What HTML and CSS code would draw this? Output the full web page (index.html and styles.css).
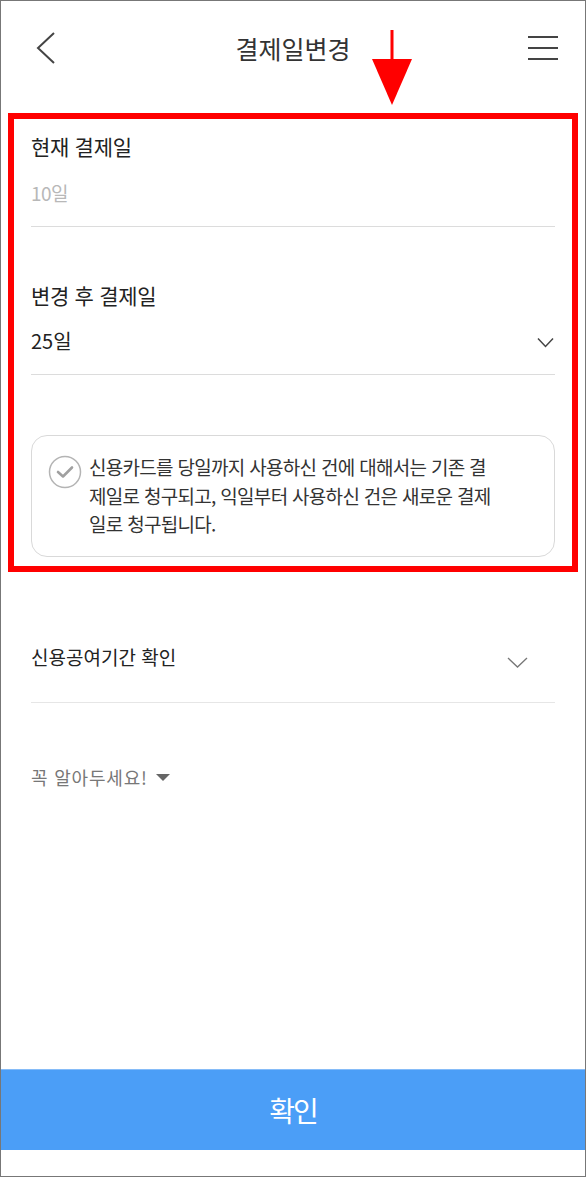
FILE: index.html
```html
<!DOCTYPE html>
<html lang="ko">
<head>
<meta charset="utf-8">
<link rel="stylesheet" href="styles.css">
</head>
<body>
<div class="frame">
  <header class="topbar">
    <svg class="back" width="20" height="32" viewBox="0 0 20 32"><polyline points="18,1 2,16 18,31" fill="none" stroke="#444" stroke-width="2"/></svg>
    <h1 class="title">결제일변경</h1>
    <svg class="menu" width="32" height="26" viewBox="0 0 32 26"><g stroke="#444" stroke-width="2"><line x1="1" y1="2" x2="31" y2="2"/><line x1="1" y1="13" x2="31" y2="13"/><line x1="1" y1="24" x2="31" y2="24"/></g></svg>
  </header>
  <svg class="marker-arrow" width="46" height="80" viewBox="0 0 46 80"><rect x="21.5" y="2" width="3" height="34" fill="#ff0000"/><polygon points="3,31 43,31 23,77" fill="#ff0000"/></svg>

  <section class="highlight">
    <div class="field">
      <div class="label">현재 결제일</div>
      <div class="value muted">10일</div>
    </div>
    <div class="field field-second">
      <div class="label">변경 후 결제일</div>
      <div class="value select">
        <span>25일</span>
        <svg class="chev" width="17" height="11" viewBox="0 0 17 11"><polyline points="1,1.5 8.5,9.5 16,1.5" fill="none" stroke="#444" stroke-width="1.5"/></svg>
      </div>
    </div>
    <div class="notice">
      <svg class="check" width="34" height="34" viewBox="0 0 34 34"><circle cx="17" cy="17" r="15.5" fill="none" stroke="#b4b4b4" stroke-width="1.5"/><polyline points="10,17 15,21.5 24,12.5" fill="none" stroke="#a0a0a0" stroke-width="2.6" stroke-linejoin="round" stroke-linecap="round"/></svg>
      <p class="notice-text">신용카드를 당일까지 사용하신 건에 대해서는 기존 결<br>제일로 청구되고, 익일부터 사용하신 건은 새로운 결제<br>일로 청구됩니다.</p>
    </div>
  </section>

  <div class="row">
    <span class="row-label">신용공여기간 확인</span>
    <svg class="chev2" width="21" height="11" viewBox="0 0 21 11"><polyline points="1,1 10.5,10 20,1" fill="none" stroke="#777" stroke-width="1.3"/></svg>
  </div>

  <div class="tip">꼭 알아두세요! <svg class="tri" width="14" height="8" viewBox="0 0 14 8"><polygon points="0,0 14,0 7,7" fill="#666"/></svg></div>

  <button class="confirm">확인</button>
</div>
</body>
</html>
```

FILE: styles.css
```css
* { box-sizing: border-box; }
html, body { margin: 0; padding: 0; background: #fff; }
body { font-family: "Noto Sans CJK KR", "Noto Sans", sans-serif; color: #222; }

.frame {
  position: relative;
  width: 586px;
  height: 1177px;
  border: 1px solid #777;
  display: flex;
  flex-direction: column;
  overflow: hidden;
}

.topbar {
  height: 94px;
  display: grid;
  grid-template-columns: 1fr auto 1fr;
  align-items: center;
  padding: 0 26px;
}
.back { justify-self: start; display: block; margin-left: 9px; }
.menu { justify-self: end; display: block; }
.title {
  margin: 0;
  font-size: 25px;
  font-weight: 400;
  color: #333;
  letter-spacing: 0;
  line-height: 34px;
}

.marker-arrow {
  position: absolute;
  left: 368px;
  top: 27px;
}

.highlight {
  margin: 18px 7px 0 7px;
  border: 6px solid #ff0000;
  padding: 12px 17px 9px 17px;
}

.field {
  border-bottom: 1px solid #dcdcdc;
  padding-bottom: 19px;
}
.field-second { margin-top: 53px; }
.label {
  font-size: 21px;
  line-height: 30px;
  letter-spacing: -0.3px;
  color: #222;
}
.value {
  margin-top: 18px;
  font-size: 19px;
  line-height: 28px;
  letter-spacing: -0.5px;
  color: #222;
}
.value.muted { color: #b8b8b8; }
.select {
  display: flex;
  align-items: center;
  justify-content: space-between;
  margin-top: 17px;
  font-size: 20px;
  letter-spacing: 0;
}
.chev { display: block; margin-right: 1px; margin-top: 3px; }

.notice {
  margin-top: 60px;
  border: 1px solid #d9d9d9;
  border-radius: 16px;
  padding: 17px 20px 17px 16px;
  display: flex;
  align-items: flex-start;
  gap: 7px;
}
.check { display: block; flex: none; margin-top: 2px; }
.notice-text {
  margin: 0;
  font-size: 19px;
  line-height: 28.5px;
  letter-spacing: -0.7px;
  color: #333;
  white-space: nowrap;
}

.row {
  margin: 70px 30px 0 30px;
  padding-bottom: 30px;
  border-bottom: 1px solid #e6e6e6;
  display: flex;
  align-items: center;
  justify-content: space-between;
}
.row-label {
  font-size: 19px;
  line-height: 30px;
  letter-spacing: 0;
  color: #222;
}
.chev2 { display: block; margin-right: 27px; margin-top: 12px; }

.tip {
  margin: 61px 30px 0 30px;
  font-size: 18px;
  line-height: 26px;
  letter-spacing: 0.8px;
  color: #777;
  display: flex;
  align-items: center;
}
.tri { display: block; margin-left: 8px; margin-top: 2px; }

.confirm {
  margin-top: auto;
  margin-bottom: 26px;
  height: 81px;
  width: 100%;
  border: 0;
  border-top: 1px solid #86bcf8;
  background: #4b9ef7;
  color: #fff;
  font-family: "Noto Sans CJK KR", "Noto Sans", sans-serif;
  font-size: 28px;
  letter-spacing: -2px;
  padding: 0;
}
```
